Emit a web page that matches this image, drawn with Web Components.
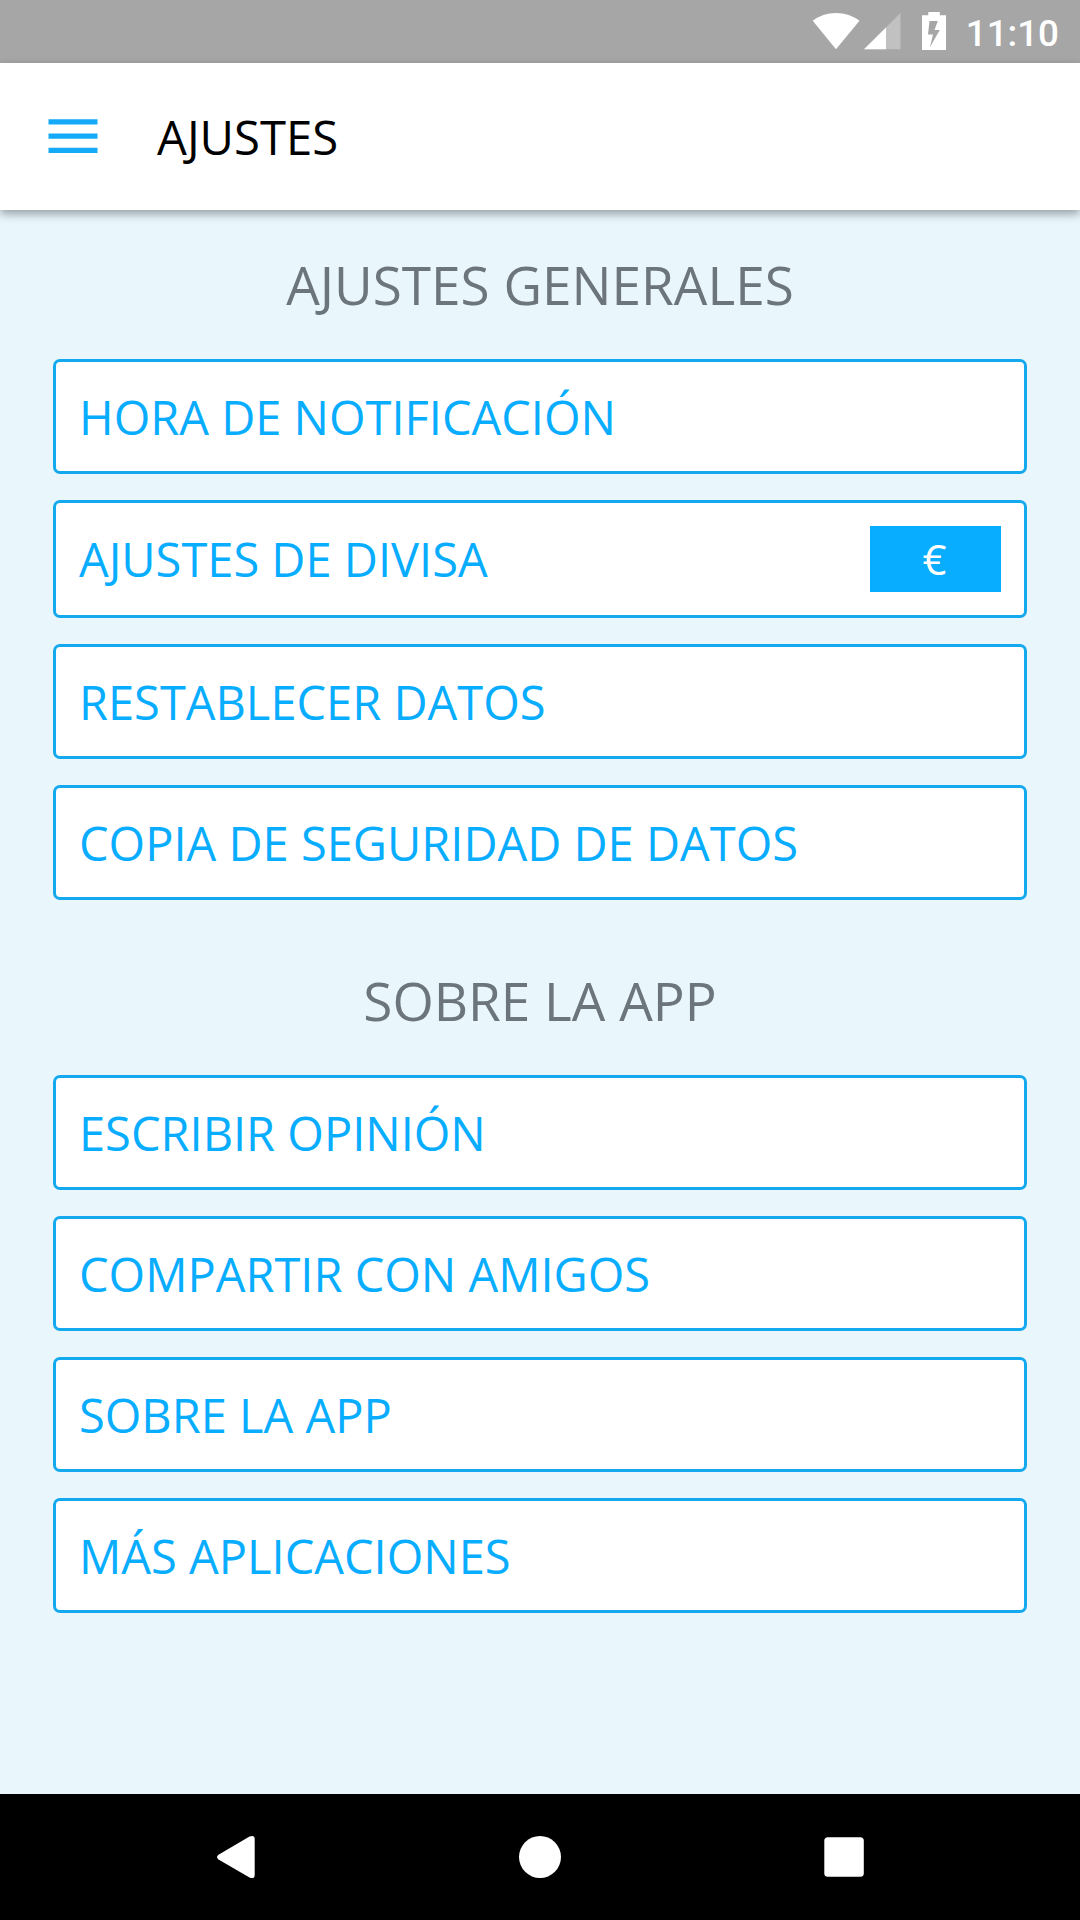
<!DOCTYPE html>
<html lang="es">
<head>
<meta charset="utf-8">
<title>Ajustes</title>
<style>
  html, body {
    margin: 0;
    padding: 0;
  }
  body {
    --accent: #08adff;
    --line: #14a8ef;
    --surface: #e9f7fd;
    --muted: #6b757b;
    width: 1080px;
    height: 1920px;
    overflow: hidden;
    font-family: "Open Sans", "Noto Sans", sans-serif;
  }
</style>
</head>
<body>
<settings-screen></settings-screen>

<script>
class StatusBar extends HTMLElement {
  constructor() {
    super();
    this.attachShadow({ mode: "open" });
  }

  connectedCallback() {
    this.shadowRoot.innerHTML = `
      <style>
        :host {
          display: flex;
          justify-content: flex-end;
          align-items: center;
          box-sizing: border-box;
          height: 63px;
          padding-right: 21px;
          background: #a6a6a6;
          color: #fff;
          font: 500 36.75px/63px Roboto, sans-serif;
        }
        svg {
          display: block;
          height: 63px;
        }
        .clock {
          margin-left: 18px;
          padding-top: 3px;
        }
      </style>
      <svg width="140" height="63" viewBox="808 0 140 63" fill="#fff">
        <path d="M812.7 20.7C819 16 827 13 836 13s17 3 23.500 7.700L836 49.300z"/>
        <path d="M900.500 13v36.300H864z" opacity=".3"/>
        <path d="M886 27.500v21.800h-22z"/>
        <path fill-rule="evenodd" d="M928.300 12h11.500v3.300h6.200V50h-24V15.300h6.300zM929.500 21l-1.500 13.500h5L930 47l9.800-17h-5.300l3.300-9z"/>
      </svg>
      <span class="clock"><slot></slot></span>
    `;
  }
}

class AppBar extends HTMLElement {
  constructor() {
    super();
    this.attachShadow({ mode: "open" });
  }

  connectedCallback() {
    this.shadowRoot.innerHTML = `
      <style>
        :host {
          display: flex;
          align-items: center;
          box-sizing: border-box;
          position: relative;
          z-index: 1;
          height: 147px;
          padding-left: 48px;
          background: #fff;
          color: #000;
          font-size: 47.25px;
          box-shadow: 0 4px 9px rgba(0, 0, 0, 0.36);
        }
        svg {
          display: block;
          margin-right: 59px;
        }
      </style>
      <svg width="50" height="36" viewBox="0 0 50 36" fill="#14aaf8">
        <path d="M.5 .3h49v5.200H.5zM.5 14.500h49v5.200H.5zM.5 28.700h49v5.200H.5z"/>
      </svg>
      <slot></slot>
    `;
  }
}

class SettingsSection extends HTMLElement {
  constructor() {
    super();
    this.attachShadow({ mode: "open" });
  }

  connectedCallback() {
    this.shadowRoot.innerHTML = `
      <style>
        :host {
          display: flex;
          flex-direction: column;
          padding: 0 53px;
          margin-bottom: 26px;
        }
        h2 {
          margin: 0;
          color: var(--muted);
          font-size: 53.1px;
          font-weight: 400;
          line-height: 149px;
          text-align: center;
          white-space: nowrap;
        }
        .items {
          display: flex;
          flex-direction: column;
          gap: 26px;
        }
      </style>
      <h2>${this.getAttribute("heading")}</h2>
      <div class="items"><slot></slot></div>
    `;
  }
}

class SettingsItem extends HTMLElement {
  constructor() {
    super();
    this.attachShadow({ mode: "open" });
  }

  connectedCallback() {
    this.shadowRoot.innerHTML = `
      <style>
        :host {
          display: flex;
          align-items: center;
          justify-content: space-between;
          box-sizing: border-box;
          min-height: 115px;
          padding: 22px 23px;
          border: 3px solid var(--line);
          border-radius: 7px;
          background: #fff;
          color: var(--accent);
          font-size: 47px;
          line-height: 64px;
          white-space: nowrap;
        }
      </style>
      <slot></slot>
      <slot name="value"></slot>
    `;
  }
}

class CurrencyBadge extends HTMLElement {
  constructor() {
    super();
    this.attachShadow({ mode: "open" });
  }

  connectedCallback() {
    this.shadowRoot.innerHTML = `
      <style>
        :host {
          display: block;
          box-sizing: border-box;
          width: 131px;
          height: 66px;
          margin: 1px 0;
          padding-right: 2px;
          background: var(--accent);
          color: #fff;
          font-size: 42px;
          line-height: 66px;
          text-align: center;
        }
      </style>
      <slot></slot>
    `;
  }
}

class NavBar extends HTMLElement {
  constructor() {
    super();
    this.attachShadow({ mode: "open" });
  }

  connectedCallback() {
    this.shadowRoot.innerHTML = `
      <style>
        :host {
          display: flex;
          justify-content: center;
          align-items: center;
          gap: 220px;
          height: 126px;
          background: #000;
        }
        svg {
          display: block;
        }
      </style>
      <svg width="84" height="84" viewBox="0 0 84 84" fill="#fff">
        <path d="M24.500 39.700L55.500 21.500Q60.700 19.500 60.700 24V60Q60.700 64.500 55.500 62.500L24.500 44.500Q21.500 42 24.500 39.700z"/>
      </svg>
      <svg width="84" height="84" viewBox="0 0 84 84" fill="#fff">
        <circle cx="42" cy="42" r="21"/>
      </svg>
      <svg width="84" height="84" viewBox="0 0 84 84" fill="#fff">
        <rect x="22.300" y="22.300" width="39.500" height="39.500" rx="3.500"/>
      </svg>
    `;
  }
}

class SettingsScreen extends HTMLElement {
  constructor() {
    super();
    this.attachShadow({ mode: "open" });
  }

  connectedCallback() {
    this.shadowRoot.innerHTML = `
      <style>
        :host {
          display: flex;
          flex-direction: column;
          height: 1920px;
          background: var(--surface);
        }
        main {
          flex: 1;
        }
      </style>
      <status-bar>11:10</status-bar>
      <app-bar>AJUSTES</app-bar>
      <main>
        <settings-section heading="AJUSTES GENERALES">
          <settings-item>HORA DE NOTIFICACIÓN</settings-item>
          <settings-item>AJUSTES DE DIVISA<currency-badge slot="value">€</currency-badge></settings-item>
          <settings-item>RESTABLECER DATOS</settings-item>
          <settings-item>COPIA DE SEGURIDAD DE DATOS</settings-item>
        </settings-section>
        <settings-section heading="SOBRE LA APP">
          <settings-item>ESCRIBIR OPINIÓN</settings-item>
          <settings-item>COMPARTIR CON AMIGOS</settings-item>
          <settings-item>SOBRE LA APP</settings-item>
          <settings-item>MÁS APLICACIONES</settings-item>
        </settings-section>
      </main>
      <nav-bar></nav-bar>
    `;
  }
}

customElements.define("status-bar", StatusBar);
customElements.define("app-bar", AppBar);
customElements.define("settings-section", SettingsSection);
customElements.define("settings-item", SettingsItem);
customElements.define("currency-badge", CurrencyBadge);
customElements.define("nav-bar", NavBar);
customElements.define("settings-screen", SettingsScreen);
</script>
</body>
</html>
